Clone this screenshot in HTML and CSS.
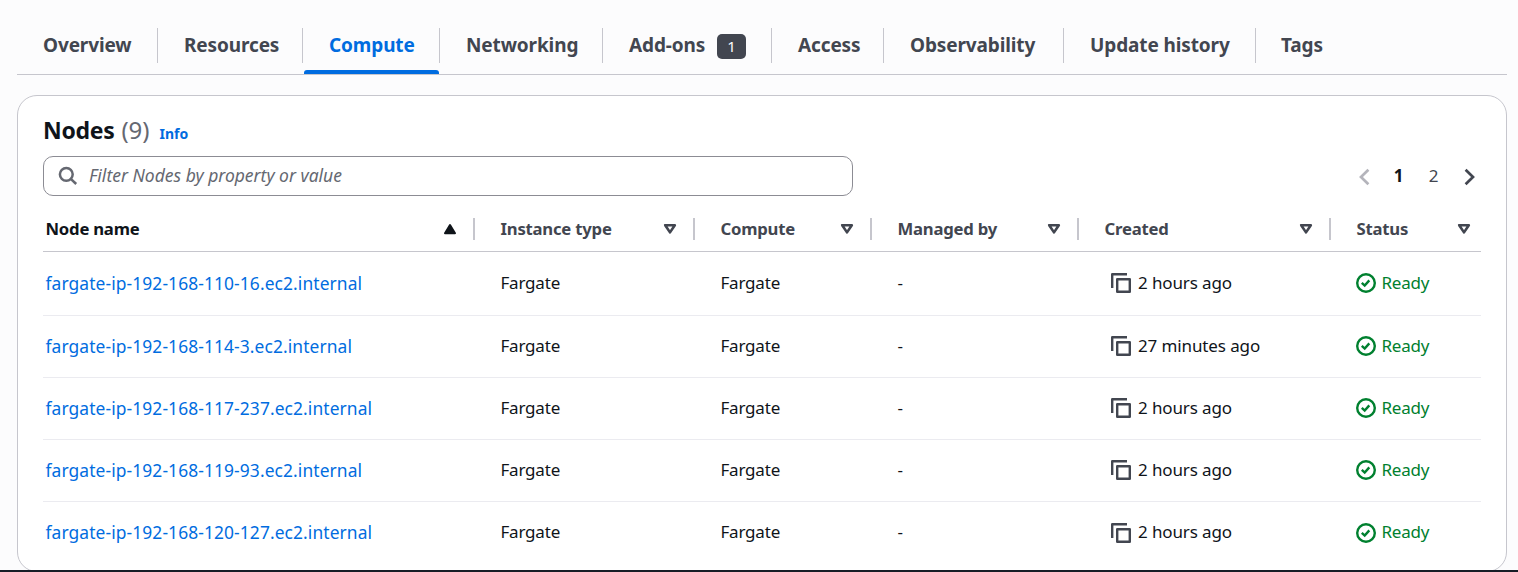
FILE: index.html
```
<!DOCTYPE html>
<html lang="en">
<head>
<meta charset="utf-8">
<title>Cluster compute</title>
<link rel="stylesheet" href="styles.css">
</head>
<body>
<svg class="defs" aria-hidden="true">
  <symbol id="copy" viewBox="0 0 20 20"><path d="M1.2 15V1.2H16M6.2 6.2h12.6v12.6H6.2z" fill="none" stroke="currentColor" stroke-width="2.4" stroke-linejoin="round"/></symbol>
  <symbol id="ok" viewBox="0 0 20 20"><g fill="none" stroke="currentColor" stroke-width="2.4"><circle cx="10" cy="10" r="8.8"/><path d="M5.8 9.9l2.9 2.7 4.6-5.2"/></g></symbol>
  <symbol id="sort" viewBox="0 0 14 12"><path d="M2.2 2.2h9.6L7 9.4z" fill="none" stroke="currentColor" stroke-width="2.6" stroke-linejoin="round"/></symbol>
  <symbol id="asc" viewBox="0 0 14 12"><path d="M7 2l5 8.2H2z" fill="currentColor" stroke="currentColor" stroke-width="2" stroke-linejoin="round"/></symbol>
</svg>
<main class="page">
  <nav class="tabs">
    <a class="tab"><span>Overview</span></a>
    <a class="tab"><span>Resources</span></a>
    <a class="tab active"><span>Compute</span></a>
    <a class="tab"><span>Networking</span></a>
    <a class="tab"><span>Add-ons</span><b class="badge">1</b></a>
    <a class="tab"><span>Access</span></a>
    <a class="tab"><span>Observability</span></a>
    <a class="tab"><span>Update history</span></a>
    <a class="tab"><span>Tags</span></a>
  </nav>
  <section class="card">
    <header class="heading"><h2>Nodes</h2><span class="count">(9)</span><a class="info">Info</a></header>
    <div class="tools">
      <div class="search">
        <svg viewBox="0 0 20 20"><g fill="none" stroke="currentColor" stroke-width="2.5"><circle cx="8.3" cy="8.3" r="6.4"/><path d="M12.8 12.8l5.4 5.2"/></g></svg>
        <span>Filter Nodes by property or value</span>
      </div>
      <div class="pager">
        <svg class="prev" viewBox="0 0 11 18"><path d="M9.4 1.8L2 9l7.4 7.2"/></svg>
        <span class="page-no current">1</span>
        <span class="page-no">2</span>
        <svg class="next" viewBox="0 0 11 18"><path d="M1.6 1.8L9 9l-7.4 7.2"/></svg>
      </div>
    </div>
    <div class="table">
      <div class="row head">
        <div class="th sorted"><span>Node name</span><svg><use href="#asc"/></svg></div>
        <div class="th"><span>Instance type</span><svg><use href="#sort"/></svg></div>
        <div class="th"><span>Compute</span><svg><use href="#sort"/></svg></div>
        <div class="th"><span>Managed by</span><svg><use href="#sort"/></svg></div>
        <div class="th"><span>Created</span><svg><use href="#sort"/></svg></div>
        <div class="th"><span>Status</span><svg><use href="#sort"/></svg></div>
      </div>
      <div class="row first">
        <a class="td link">fargate-ip-192-168-110-16.ec2.internal</a><div class="td">Fargate</div><div class="td">Fargate</div><div class="td">-</div>
        <div class="td created"><svg><use href="#copy"/></svg><span>2 hours ago</span></div><div class="td status"><svg><use href="#ok"/></svg><span>Ready</span></div>
      </div>
      <div class="row">
        <a class="td link">fargate-ip-192-168-114-3.ec2.internal</a><div class="td">Fargate</div><div class="td">Fargate</div><div class="td">-</div>
        <div class="td created"><svg><use href="#copy"/></svg><span>27 minutes ago</span></div><div class="td status"><svg><use href="#ok"/></svg><span>Ready</span></div>
      </div>
      <div class="row">
        <a class="td link">fargate-ip-192-168-117-237.ec2.internal</a><div class="td">Fargate</div><div class="td">Fargate</div><div class="td">-</div>
        <div class="td created"><svg><use href="#copy"/></svg><span>2 hours ago</span></div><div class="td status"><svg><use href="#ok"/></svg><span>Ready</span></div>
      </div>
      <div class="row">
        <a class="td link">fargate-ip-192-168-119-93.ec2.internal</a><div class="td">Fargate</div><div class="td">Fargate</div><div class="td">-</div>
        <div class="td created"><svg><use href="#copy"/></svg><span>2 hours ago</span></div><div class="td status"><svg><use href="#ok"/></svg><span>Ready</span></div>
      </div>
      <div class="row last">
        <a class="td link">fargate-ip-192-168-120-127.ec2.internal</a><div class="td">Fargate</div><div class="td">Fargate</div><div class="td">-</div>
        <div class="td created"><svg><use href="#copy"/></svg><span>2 hours ago</span></div><div class="td status"><svg><use href="#ok"/></svg><span>Ready</span></div>
      </div>
    </div>
  </section>
</main>
<footer class="footer"></footer>
</body>
</html>
```

FILE: styles.css
```
* { box-sizing: border-box; }
body {
  margin: 0;
  height: 572px;
  display: flex;
  flex-direction: column;
  overflow: hidden;
  background: #fcfcfd;
  color: #0f141a;
  font: 17px/24px "Noto Sans", "Open Sans", sans-serif;
}
.defs { position: absolute; width: 0; height: 0; }
.page { height: 570px; overflow: hidden; padding: 0 11px 0 17px; }
.footer { height: 2px; background: #161d26; }

.tabs {
  display: grid;
  grid-template-columns: 141px 145px 137px 163px 169px 112px 180px 192px 251px;
  height: 75px;
  padding-top: 28px;
  border-bottom: 1px solid #c6c6cd;
}
.tab {
  display: flex;
  height: 35px;
  padding-left: 26px;
  border-right: 1px solid #c6c6cd;
  color: #424650;
  font-size: 19px;
  font-weight: 700;
  line-height: 35px;
  letter-spacing: -0.12px;
  white-space: nowrap;
}
.tab:last-child { border-right: 0; padding-left: 25px; }
.tab.active { position: relative; color: #006ce0; }
.tab.active::after {
  content: "";
  position: absolute;
  left: 1px;
  right: 0;
  bottom: -11px;
  height: 4px;
  border-radius: 3px 3px 0 0;
  background: #006ce0;
}
.badge {
  width: 29px;
  height: 25px;
  margin: 6px 26px 0 auto;
  margin-right: 25px;
  border-radius: 5px;
  background: #424650;
  color: #fcfcfd;
  font-size: 15px;
  font-weight: 400;
  line-height: 25px;
  text-align: center;
}

.card {
  height: 477px;
  margin-top: 20px;
  padding: 0 25px;
  border: 1px solid #c6c6cd;
  border-radius: 20px;
  background: #fff;
}
.heading { display: flex; align-items: baseline; height: 60px; padding-top: 17px; line-height: 34px; }
.heading h2 { margin: 0; font-size: 23px; font-weight: 700; letter-spacing: -0.3px; }
.count { margin-left: 7px; color: #656871; font-size: 24px; }
.info { margin-left: 10px; color: #006ce0; font-size: 14px; font-weight: 700; }

.tools { display: flex; justify-content: space-between; align-items: center; height: 40px; }
.search {
  display: flex;
  align-items: center;
  width: 810px;
  height: 40px;
  padding-left: 14px;
  border: 1px solid #8c8c94;
  border-radius: 10px;
  color: #656871;
  font-size: 17.5px;
  font-style: italic;
}
.search svg { width: 20px; height: 20px; margin-right: 11px; }
.search span { padding-bottom: 2px; }
.pager { display: flex; align-items: center; padding-right: 6px; color: #424650; font-size: 17px; }
.pager svg { width: 11px; height: 18px; margin-top: 2px; fill: none; stroke: currentColor; stroke-width: 2.7; }
.pager .prev { color: #b4b4bb; }
.page-no { width: 35px; text-align: center; }
.page-no.current { margin-left: 11px; color: #0f141a; font-weight: 700; }
.pager .next { margin-left: 13px; }

.table { width: 1438px; }
.row {
  display: grid;
  grid-template-columns: 432px 220px 177px 207px 252px 150px;
  height: 62px;
  border-bottom: 1px solid #ebebf0;
}
.row.head { height: 56px; border-bottom-color: #c6c6cd; }
.row.first { height: 64px; }
.row.last { border-bottom: 0; }
.th {
  display: flex;
  align-items: center;
  height: 22px;
  margin-top: 22px;
  padding: 0 16px 0 25.5px;
  border-right: 2px solid #c6c6cd;
  color: #424650;
  font-size: 16.7px;
  font-weight: 700;
  letter-spacing: -0.22px;
  justify-content: space-between;
}
.th:last-child { padding-right: 10px; border-right: 0; }
.th:first-child { padding-left: 2.5px; }
.th.sorted { color: #0f141a; }
.th svg { width: 14px; height: 12px; }
.td {
  display: flex;
  align-items: center;
  padding: 0 0 2px 25.5px;
  letter-spacing: -0.2px;
  white-space: nowrap;
}
.td svg { width: 20px; height: 20px; margin-top: 1px; }
.td.link { padding-left: 2.5px; color: #006ce0; font-size: 17.4px; letter-spacing: 0.1px; }
.td.created { padding-left: 32px; letter-spacing: -0.12px; }
.td.created svg { margin-right: 7px; color: #424650; }
.td.status { padding-left: 25px; color: #00802f; }
.td.status svg { margin-right: 5.5px; }
```
